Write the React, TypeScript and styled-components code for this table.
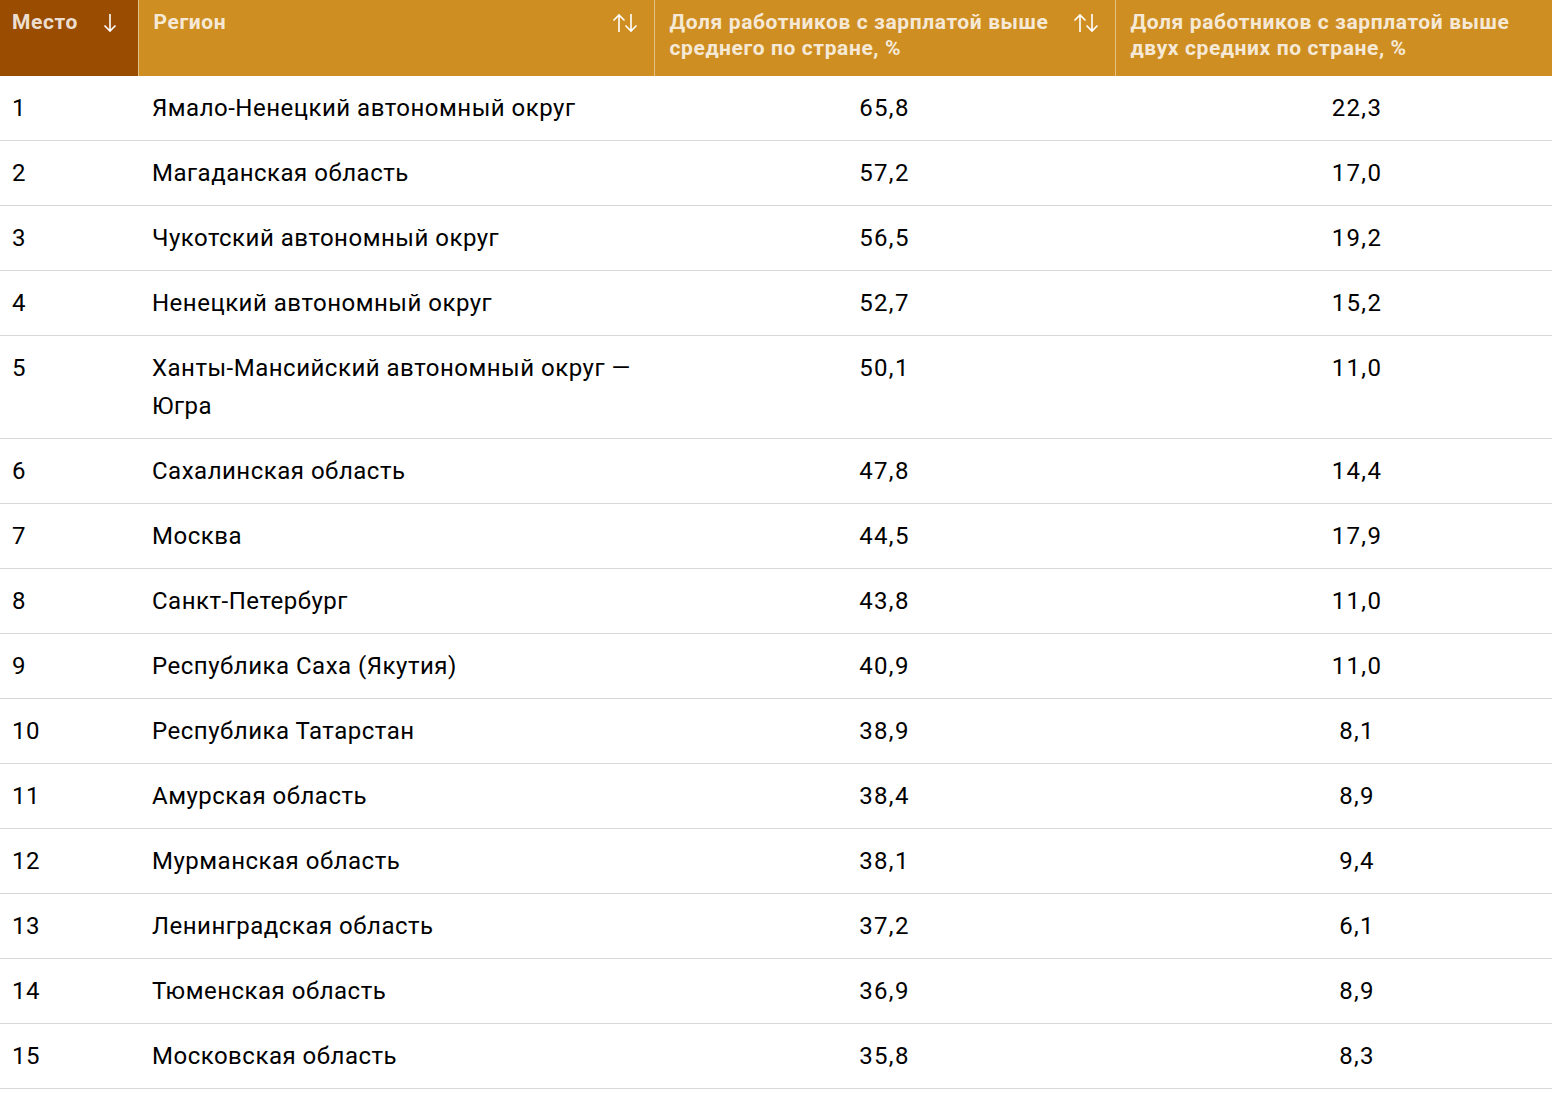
import styled, { createGlobalStyle } from "styled-components";

type Row = {
  place: number;
  region: string;
  aboveAverage: string;
  aboveDouble: string;
};

const rows: Row[] = [
  { place: 1, region: "Ямало-Ненецкий автономный округ", aboveAverage: "65,8", aboveDouble: "22,3" },
  { place: 2, region: "Магаданская область", aboveAverage: "57,2", aboveDouble: "17,0" },
  { place: 3, region: "Чукотский автономный округ", aboveAverage: "56,5", aboveDouble: "19,2" },
  { place: 4, region: "Ненецкий автономный округ", aboveAverage: "52,7", aboveDouble: "15,2" },
  { place: 5, region: "Ханты-Мансийский автономный округ — Югра", aboveAverage: "50,1", aboveDouble: "11,0" },
  { place: 6, region: "Сахалинская область", aboveAverage: "47,8", aboveDouble: "14,4" },
  { place: 7, region: "Москва", aboveAverage: "44,5", aboveDouble: "17,9" },
  { place: 8, region: "Санкт-Петербург", aboveAverage: "43,8", aboveDouble: "11,0" },
  { place: 9, region: "Республика Саха (Якутия)", aboveAverage: "40,9", aboveDouble: "11,0" },
  { place: 10, region: "Республика Татарстан", aboveAverage: "38,9", aboveDouble: "8,1" },
  { place: 11, region: "Амурская область", aboveAverage: "38,4", aboveDouble: "8,9" },
  { place: 12, region: "Мурманская область", aboveAverage: "38,1", aboveDouble: "9,4" },
  { place: 13, region: "Ленинградская область", aboveAverage: "37,2", aboveDouble: "6,1" },
  { place: 14, region: "Тюменская область", aboveAverage: "36,9", aboveDouble: "8,9" },
  { place: 15, region: "Московская область", aboveAverage: "35,8", aboveDouble: "8,3" },
];

const SortDown = () => (
  <svg width="14" height="20" viewBox="0 0 14 20" fill="none" stroke="#fff" strokeWidth="1.6">
    <path d="M7 1v17M1.5 12.5L7 18l5.5-5.5" />
  </svg>
);

const SortBoth = () => (
  <svg width="26" height="20" viewBox="0 0 26 20" fill="none" stroke="#fff" strokeWidth="1.6">
    <path d="M7 19V2M1.5 7.5L7 2l5.5 5.5" />
    <path d="M19 1v17M13.5 12.5L19 18l5.5-5.5" />
  </svg>
);

const App = () => (
  <>
    <GlobalStyle />
    <StyledViewport>
      <StyledTable>
        <colgroup>
          <col style={{ width: 138 }} />
          <col style={{ width: 516 }} />
          <col style={{ width: 461 }} />
          <col style={{ width: 484 }} />
        </colgroup>
        <thead>
          <tr>
            <StyledHeadCell $active>
              <StyledHeadInner $first>
                <span>Место</span>
                <StyledIcon>
                  <SortDown />
                </StyledIcon>
              </StyledHeadInner>
            </StyledHeadCell>
            <StyledHeadCell>
              <StyledHeadInner>
                <span>Регион</span>
                <StyledIcon>
                  <SortBoth />
                </StyledIcon>
              </StyledHeadInner>
            </StyledHeadCell>
            <StyledHeadCell>
              <StyledHeadInner>
                <span>Доля работников с зарплатой выше среднего по стране, %</span>
                <StyledIcon>
                  <SortBoth />
                </StyledIcon>
              </StyledHeadInner>
            </StyledHeadCell>
            <StyledHeadCell>
              <StyledHeadInner>
                <span>Доля работников с зарплатой выше двух средних по стране, %</span>
                <StyledIcon>
                  <SortBoth />
                </StyledIcon>
              </StyledHeadInner>
            </StyledHeadCell>
          </tr>
        </thead>
        <tbody>
          {rows.map((row) => (
            <tr key={row.place}>
              <StyledCell $first>{row.place}</StyledCell>
              <StyledCell>{row.region}</StyledCell>
              <StyledCell $numeric>{row.aboveAverage}</StyledCell>
              <StyledCell $numeric>{row.aboveDouble}</StyledCell>
            </tr>
          ))}
        </tbody>
      </StyledTable>
    </StyledViewport>
  </>
);

export default App;

const GlobalStyle = createGlobalStyle`
  html, body {
    margin: 0;
    padding: 0;
    background: #fff;
    overflow: hidden;
  }

  body {
    font-family: Roboto, "Noto Sans", Arial, sans-serif;
    color: #000;
  }
`;

const StyledViewport = styled.div`
  width: 100%;
  overflow: hidden;
`;

const StyledTable = styled.table`
  width: 1599px;
  table-layout: fixed;
  border-collapse: collapse;
  border-spacing: 0;
`;

const StyledHeadCell = styled.th<{ $active?: boolean }>`
  height: 76px;
  padding: 0;
  vertical-align: top;
  text-align: left;
  background: ${({ $active }) => ($active ? "#9a4c00" : "#ce8e22")};
  border-left: 1px solid rgba(255, 255, 255, 0.45);

  &:first-child {
    border-left: none;
  }
`;

const StyledHeadInner = styled.div<{ $first?: boolean }>`
  display: flex;
  align-items: flex-start;
  justify-content: space-between;
  gap: 14px;
  padding: ${({ $first }) => ($first ? "9px 21px 0 12px" : "9px 16px 0 15px")};
  font-size: 21px;
  line-height: 26px;
  font-weight: 700;
  letter-spacing: 0.6px;
  color: rgba(255, 255, 255, 0.84);
`;

const StyledIcon = styled.span`
  display: flex;
  flex-shrink: 0;
  padding-top: 4px;
`;

const StyledCell = styled.td<{ $first?: boolean; $numeric?: boolean }>`
  padding: ${({ $first }) => ($first ? "13px 12px" : "13px 14px")};
  vertical-align: top;
  font-size: 24px;
  line-height: 38px;
  font-weight: 400;
  letter-spacing: ${({ $numeric }) => ($numeric ? "1.3px" : "0.5px")};
  color: #000;
  text-align: ${({ $numeric }) => ($numeric ? "center" : "left")};
  border-bottom: 1px solid #d8d8d8;
`;
